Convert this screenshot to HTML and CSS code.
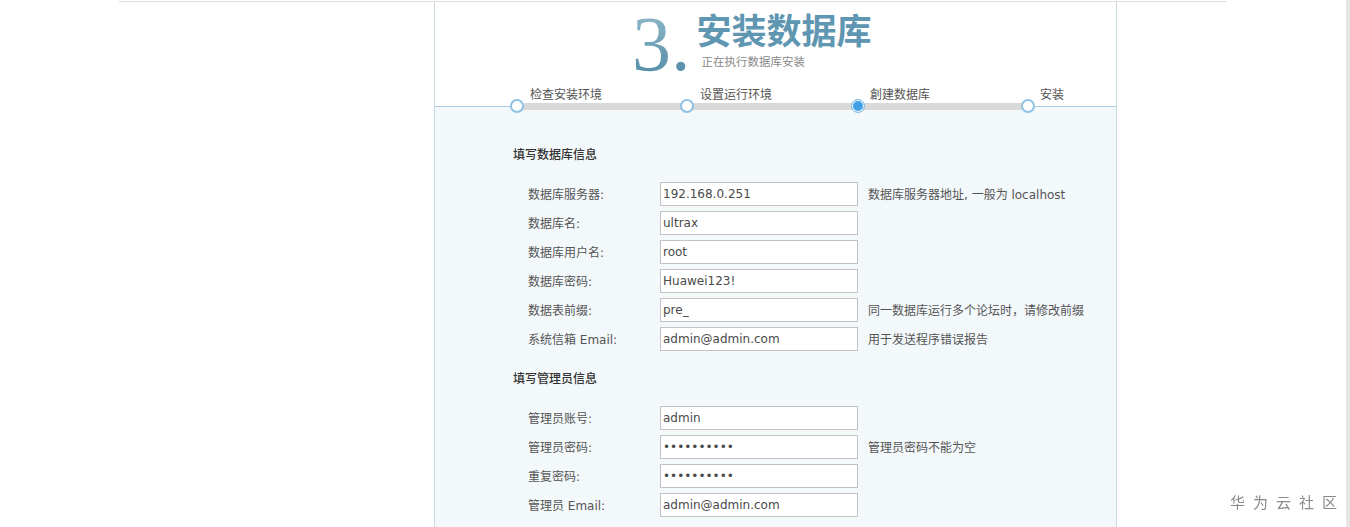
FILE: index.html
```html
<!DOCTYPE html>
<html lang="zh-CN">
<head>
    <meta charset="UTF-8">
    <meta name="viewport" content="width=device-width, initial-scale=1.0">
    <title>安装数据库</title>
    <link rel="stylesheet" href="styles.css">
</head>
<body>
    <div class="page">
        <div class="box">
            <!-- 标题 -->
            <div class="header">
                <div class="heading">
                    <span class="num">3.</span>
                    <div class="heading-text">
                        <h1>安装数据库</h1>
                        <p>正在执行数据库安装</p>
                    </div>
                </div>
                <div class="step-labels">
                    <span>检查安装环境</span>
                    <span>设置运行环境</span>
                    <span>創建数据库</span>
                    <span>安装</span>
                </div>
            </div>
            <div class="track">
                <div class="dots">
                    <i class="dot"></i>
                    <i class="dot"></i>
                    <i class="dot active"></i>
                    <i class="dot"></i>
                </div>
            </div>

            <!-- 表单 -->
            <div class="body">
                <div class="section">
                    <h3>填写数据库信息</h3>
                    <div class="rows">
                        <div class="row"><label>数据库服务器:</label><input type="text" value="192.168.0.251"><span class="hint">数据库服务器地址, 一般为 localhost</span></div>
                        <div class="row"><label>数据库名:</label><input type="text" value="ultrax"></div>
                        <div class="row"><label>数据库用户名:</label><input type="text" value="root"></div>
                        <div class="row"><label>数据库密码:</label><input type="text" value="Huawei123!"></div>
                        <div class="row"><label>数据表前缀:</label><input type="text" value="pre_"><span class="hint">同一数据库运行多个论坛时，请修改前缀</span></div>
                        <div class="row"><label>系统信箱 Email:</label><input type="text" value="admin@admin.com"><span class="hint">用于发送程序错误报告</span></div>
                    </div>
                </div>
                <div class="section">
                    <h3>填写管理员信息</h3>
                    <div class="rows">
                        <div class="row"><label>管理员账号:</label><input type="text" value="admin"></div>
                        <div class="row"><label>管理员密码:</label><input type="password" value="Huawei123!"><span class="hint">管理员密码不能为空</span></div>
                        <div class="row"><label>重复密码:</label><input type="password" value="Huawei123!"></div>
                        <div class="row"><label>管理员 Email:</label><input type="text" value="admin@admin.com"></div>
                    </div>
                </div>
            </div>
        </div>
    </div>
    <div class="watermark">华为云社区</div>
</body>
</html>
```

FILE: styles.css
```css
html, body {
    height: 100%;
}
body {
    margin: 0;
    overflow: hidden;
    background: #fff;
    border-right: 4px solid #e6e6e6;
    box-sizing: border-box;
    font: 12px "DejaVu Sans", "Noto Sans CJK SC", sans-serif;
    color: #555;
}
.page {
    width: 1108px;
    margin: 1px auto 0;
    border-top: 1px solid #dedede;
}
.box {
    width: 681px;
    margin-left: 315px;
    border-left: 1px solid #c9d9e2;
    border-right: 1px solid #c9d9e2;
}
.header {
    background: #fff;
    padding-bottom: 4px;
}
.heading {
    display: flex;
    height: 86px;
    padding-left: 197px;
}
.num {
    margin-top: 3px;
    font: 78px/78px "Liberation Serif", serif;
    background: linear-gradient(#94bbcc, #4a86a2);
    -webkit-background-clip: text;
    background-clip: text;
    color: transparent;
}
.heading-text {
    margin: 6.5px 0 0 6px;
}
.heading-text h1 {
    margin: 0;
    font: bold 35px/40px "Noto Sans CJK SC", sans-serif;
    color: #5f96b1;
}
.heading-text p {
    margin: 5.6px 0 0 5px;
    font-size: 11.5px;
    line-height: 16px;
    color: #888;
}
.step-labels {
    display: flex;
    height: 14px;
    line-height: 14px;
    padding-left: 95px;
}
.step-labels span {
    flex: 0 0 170px;
    color: #555;
}
.track {
    position: relative;
    z-index: 1;
    display: flex;
    align-items: flex-start;
    height: 1px;
    background: #a9cde3;
}
.dots {
    display: flex;
    justify-content: space-between;
    flex: 0 0 525px;
    height: 14px;
    margin: -7px 0 0 75px;
    background: linear-gradient(#d9d9d9, #d9d9d9) 7px 50% / calc(100% - 14px) 7px no-repeat;
}
.dot {
    width: 14px;
    height: 14px;
    box-sizing: border-box;
    border: 2px solid #8fc1e4;
    border-radius: 50%;
    background: #fff;
}
.dot.active {
    border-width: 1.5px;
    background: #419fe8;
    box-shadow: inset 0 0 0 1px #fff;
}
.body {
    background: #f3f8fb;
    padding: 38px 0 40px 78px;
}
.section + .section {
    margin-top: 16px;
}
.section h3 {
    margin: 0;
    font-size: 12px;
    line-height: 20px;
    font-weight: 500;
    color: #333;
}
.rows {
    margin-top: 14px;
    padding-left: 15px;
}
.row {
    display: flex;
    align-items: center;
    height: 29px;
}
.row label {
    width: 132px;
}
.row input {
    width: 198px;
    height: 24px;
    box-sizing: border-box;
    margin: 0;
    padding: 0 2px;
    border: 1px solid #c3c3c3;
    background: #fff;
    font: 12px "DejaVu Sans", sans-serif;
    color: #4a4a4a;
}
.hint {
    margin-left: 10px;
}
.watermark {
    position: fixed;
    right: 5px;
    bottom: 15px;
    font: 15px "Noto Sans CJK SC", sans-serif;
    letter-spacing: 8px;
    color: #8a8a8a;
}
```
